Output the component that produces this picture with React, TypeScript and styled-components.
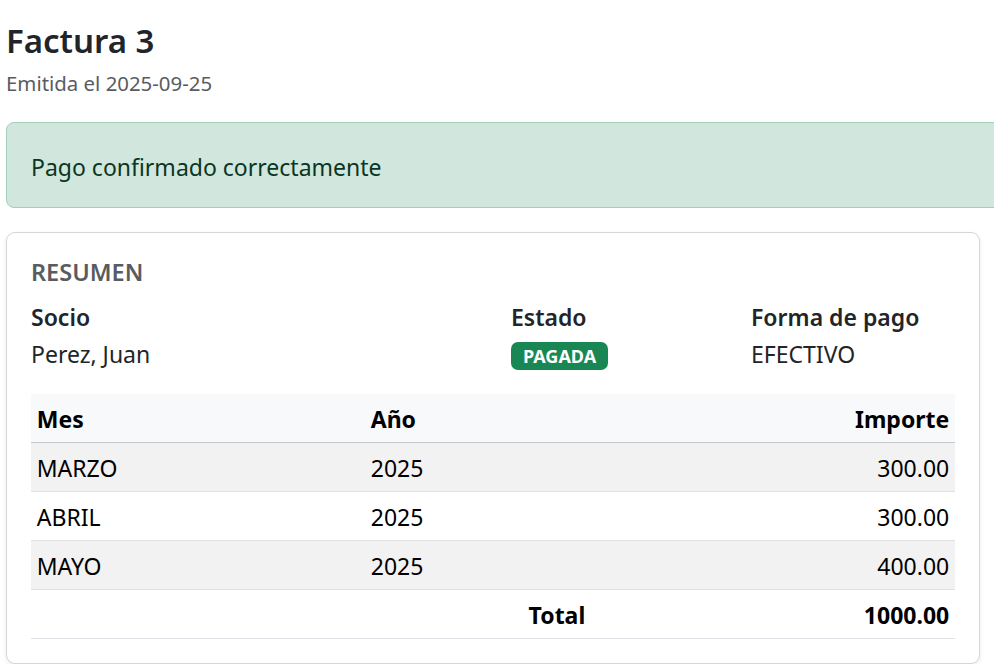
import React from "react";
import styled, { createGlobalStyle } from "styled-components";

const GlobalStyle = createGlobalStyle`
  html, body {
    margin: 0;
    padding: 0;
    background: #ffffff;
    overflow: hidden;
  }
  body {
    font-family: "Noto Sans", "Open Sans", sans-serif;
    font-size: 23px;
    line-height: 1.5;
    color: #212529;
  }
`;

const Page = styled.main`
  width: 974px;
  padding: 21px 0 0 6px;
  box-sizing: content-box;
`;

const Header = styled.header`
  display: flex;
  flex-direction: column;
  gap: 7px;
  margin-bottom: 24px;
`;

const Title = styled.h1`
  margin: 0;
  font-size: 33px;
  line-height: 40px;
  font-weight: 600;
  color: #212529;
`;

const Subtitle = styled.p`
  margin: 0;
  font-size: 20.4px;
  line-height: 30px;
  color: #595c5f;
`;

const Alert = styled.div`
  margin-right: -40px;
  margin-bottom: 24px;
  padding: 27px 24px 23px;
  font-size: 23px;
  line-height: 34px;
  color: #0a3622;
  background: #d1e7dd;
  border: 1px solid #a3cfbb;
  border-radius: 8px;
`;

const Card = styled.section`
  padding: 25px 24px 24px;
  border: 1px solid #d5d6d7;
  border-radius: 9px;
  background: #ffffff;
  box-shadow: 0 2px 5px rgba(0, 0, 0, 0.075);
`;

const CardTitle = styled.h2`
  margin: 0 0 16px;
  font-size: 23.5px;
  line-height: 28px;
  font-weight: 600;
  text-transform: uppercase;
  color: #595c5f;
`;

const InfoGrid = styled.div`
  display: grid;
  grid-template-columns: 480px 240px 1fr;
  margin-bottom: 25px;
`;

const Field = styled.div`
  display: flex;
  flex-direction: column;
  gap: 7px;
`;

const Label = styled.div`
  font-size: 23px;
  line-height: 30px;
  font-weight: 600;
  color: #212529;
`;

const Value = styled.div`
  font-size: 23px;
  line-height: 30px;
  height: 30px;
  color: #212529;
`;

const Badge = styled.span<{ $tone: string }>`
  display: inline-block;
  padding: 5px 12px;
  font-size: 18px;
  line-height: 18px;
  font-weight: 700;
  color: #ffffff;
  background: ${(p) => p.$tone};
  border-radius: 7px;
`;

const Table = styled.table`
  width: 924px;
  table-layout: fixed;
  border-collapse: collapse;
  font-size: 23px;
  line-height: 34.5px;
  color: #000000;
`;

const HeadCell = styled.th<{ $align?: string }>`
  padding: 7.5px 5.75px 6px;
  text-align: ${(p) => p.$align || "left"};
  font-weight: 700;
  background: #f8f9fa;
  border-bottom: 1px solid #c6c7c8;
`;

const Row = styled.tr<{ $striped?: boolean }>`
  background: ${(p) => (p.$striped ? "#f2f2f2" : "#ffffff")};
`;

const Cell = styled.td<{ $align?: string; $bold?: boolean }>`
  padding: 7.5px 5.75px 6px;
  text-align: ${(p) => p.$align || "left"};
  font-weight: ${(p) => (p.$bold ? 700 : 400)};
  border-bottom: 1px solid #dee2e6;
`;

const items = [
  { mes: "MARZO", anio: 2025, importe: "300.00" },
  { mes: "ABRIL", anio: 2025, importe: "300.00" },
  { mes: "MAYO", anio: 2025, importe: "400.00" },
];

export default function App() {
  return (
    <>
      <GlobalStyle />
      <Page>
        <Header>
          <Title>Factura 3</Title>
          <Subtitle>Emitida el 2025-09-25</Subtitle>
        </Header>

        <Alert>Pago confirmado correctamente</Alert>

        <Card>
          <CardTitle>Resumen</CardTitle>
          <InfoGrid>
            <Field>
              <Label>Socio</Label>
              <Value>Perez, Juan</Value>
            </Field>
            <Field>
              <Label>Estado</Label>
              <Value>
                <Badge $tone="#198754">PAGADA</Badge>
              </Value>
            </Field>
            <Field>
              <Label>Forma de pago</Label>
              <Value>EFECTIVO</Value>
            </Field>
          </InfoGrid>

          <Table>
            <colgroup>
              <col style={{ width: 334 }} />
              <col style={{ width: 226 }} />
              <col style={{ width: 364 }} />
            </colgroup>
            <thead>
              <tr>
                <HeadCell>Mes</HeadCell>
                <HeadCell>Año</HeadCell>
                <HeadCell $align="right">Importe</HeadCell>
              </tr>
            </thead>
            <tbody>
              {items.map((it, i) => (
                <Row key={it.mes} $striped={i % 2 === 0}>
                  <Cell>{it.mes}</Cell>
                  <Cell>{it.anio}</Cell>
                  <Cell $align="right">{it.importe}</Cell>
                </Row>
              ))}
            </tbody>
            <tfoot>
              <Row>
                <Cell colSpan={2} $align="right" $bold>
                  Total
                </Cell>
                <Cell $align="right" $bold>
                  1000.00
                </Cell>
              </Row>
            </tfoot>
          </Table>
        </Card>
      </Page>
    </>
  );
}
